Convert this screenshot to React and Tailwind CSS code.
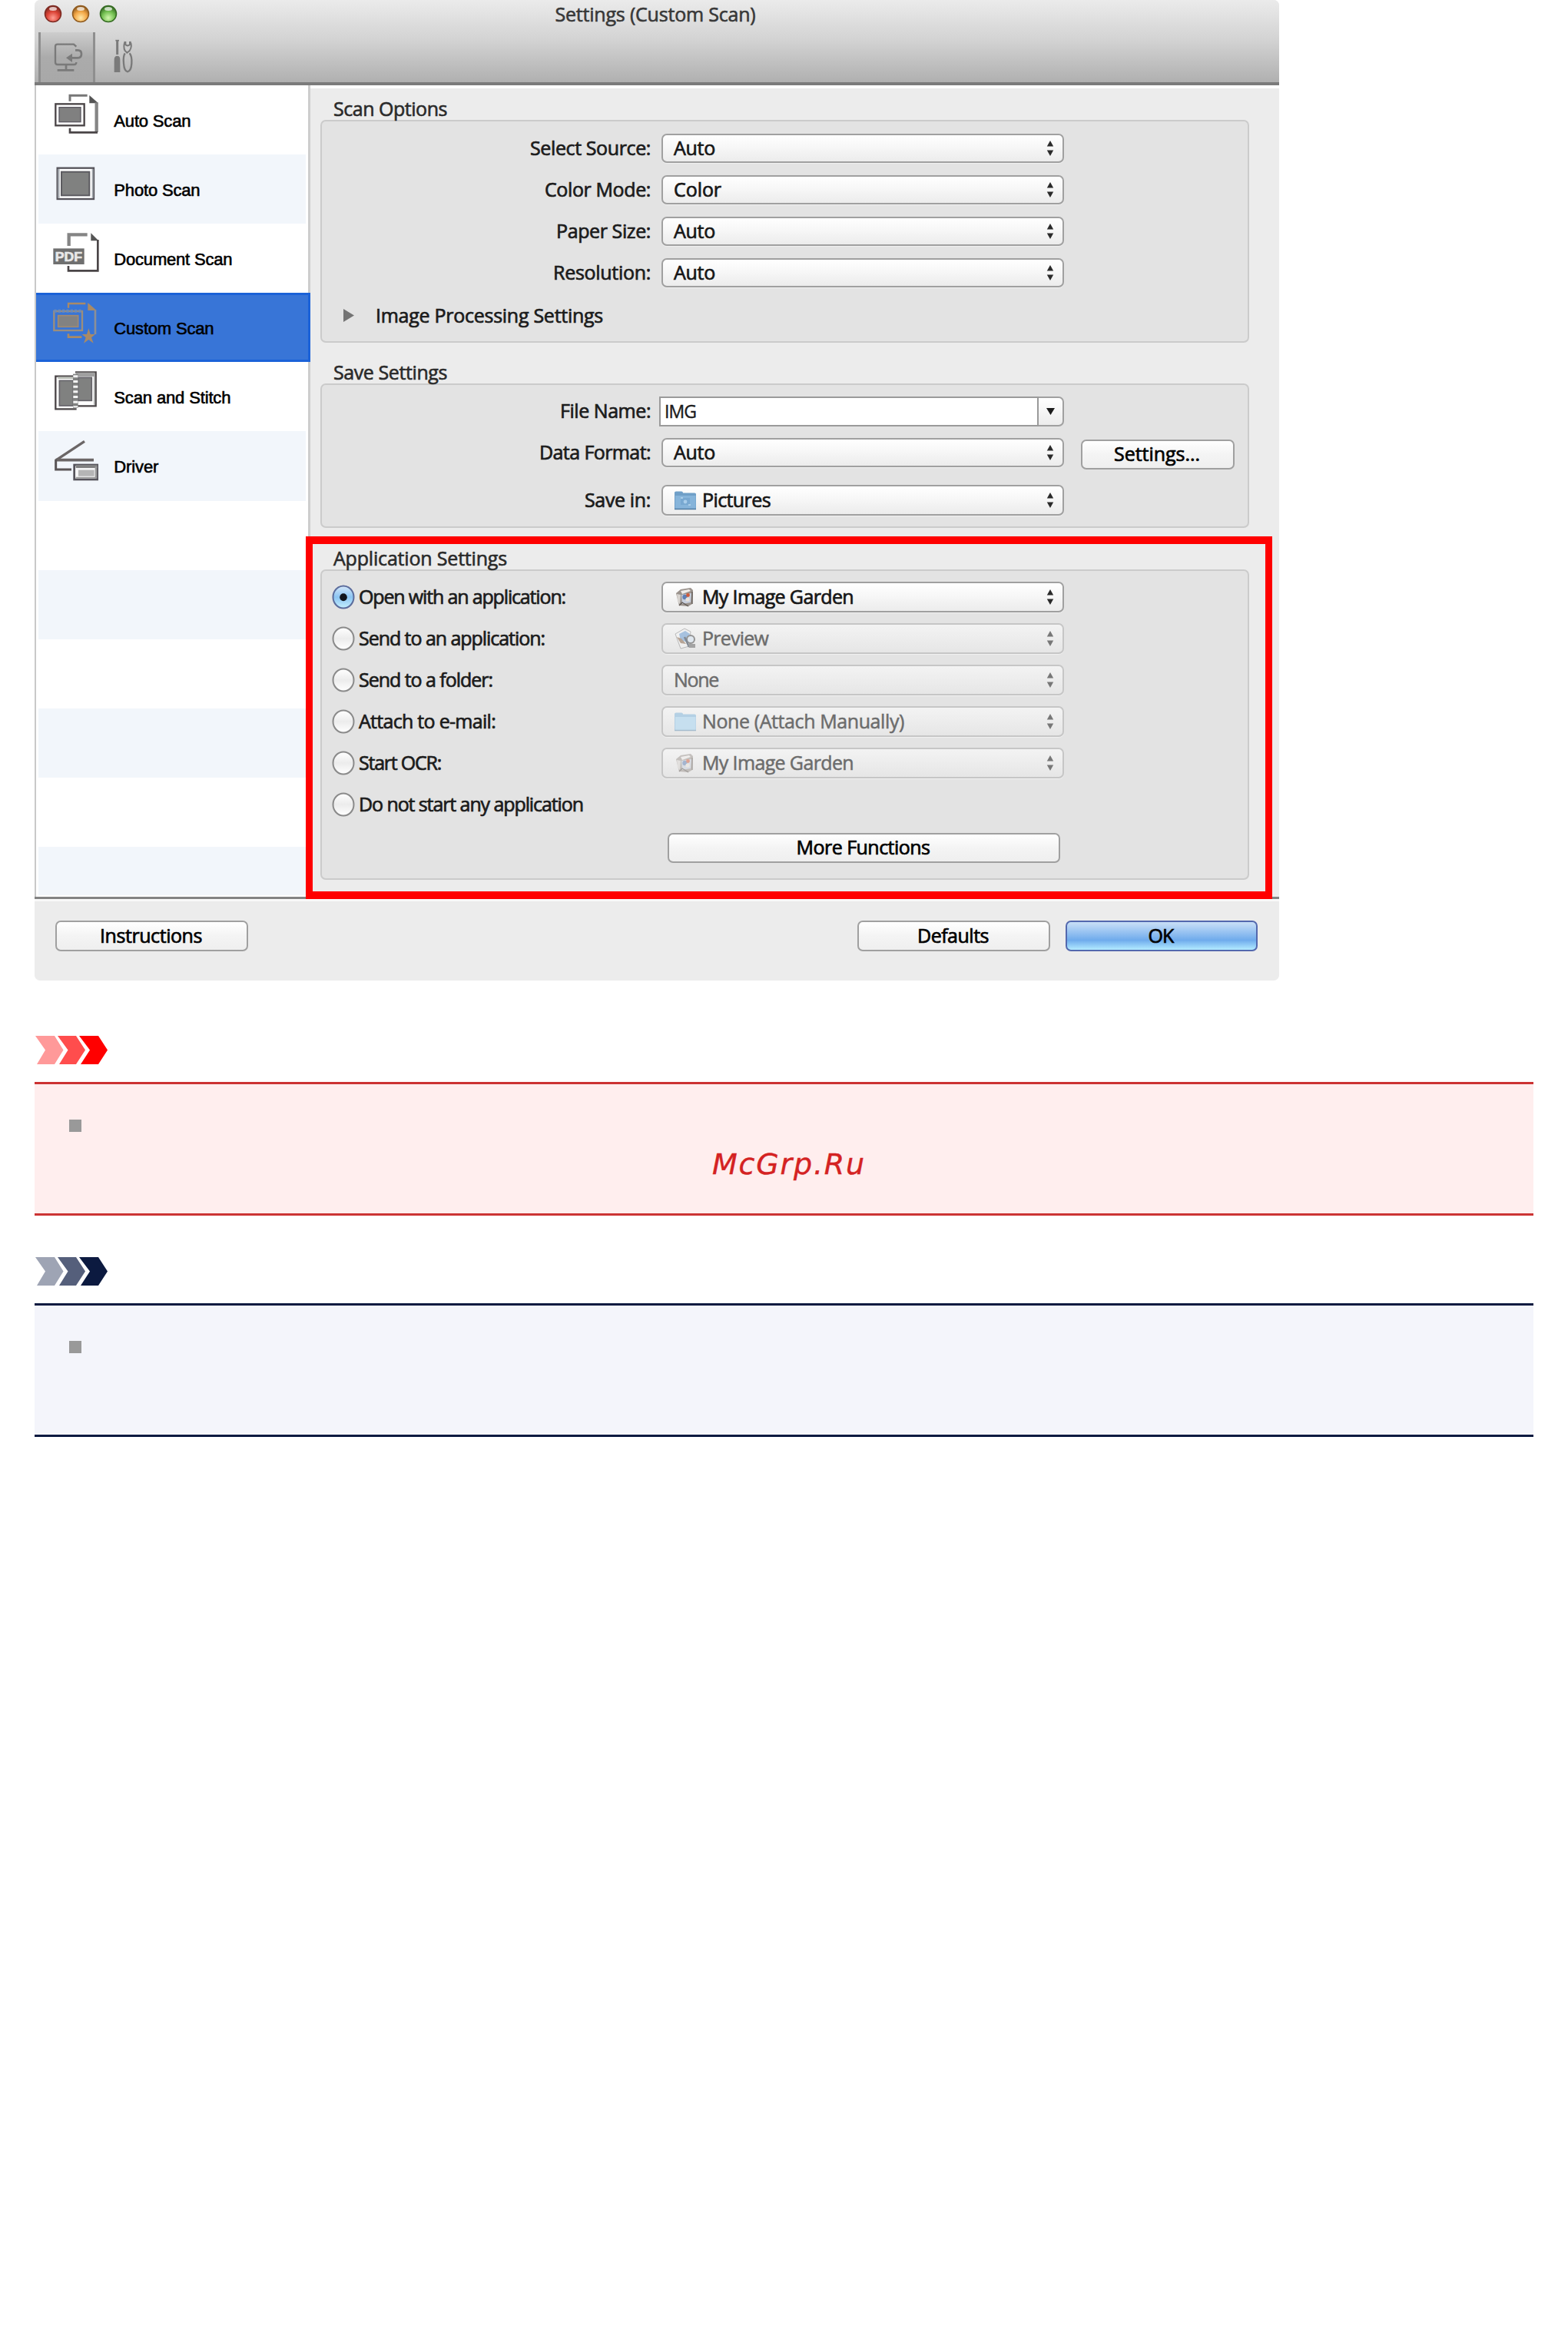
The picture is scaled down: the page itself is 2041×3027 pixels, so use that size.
import React, { useLayoutEffect, useRef, useState } from "react";

/* Single line of text whose tracking is adjusted to fill a known width. */
function Fit({ w, className = "", children }) {
  const ref = useRef(null);
  const [ls, setLs] = useState(0);
  useLayoutEffect(() => {
    const natural = ref.current.getBoundingClientRect().width;
    setLs((w - natural) / String(children).length);
  }, []);
  return (
    <span ref={ref} style={{ letterSpacing: ls }} className={`inline-block whitespace-pre ${className}`}>
      {children}
    </span>
  );
}

function Arrows({ dim }) {
  return (
    <svg width="10" height="24" viewBox="0 0 10 24" className={dim ? "fill-[#777]" : "fill-[#2a2a2a]"}>
      <path d="M5 2 L9.200 9.500 H0.800 Z M5 22 L9.200 14.500 H0.800 Z" />
    </svg>
  );
}

function FolderIcon({ pale }) {
  return (
    <svg width="30" height="26" viewBox="0 0 30 26" className="mr-[7px]">
      <path d="M1 3 Q1 1.5 3 1.5 H10 Q12 1.5 12 3.5 H27 Q29 3.5 29 5 V24.5 H1 Z" fill={pale ? "#b4d0e4" : "#6f9fc8"} />
      <path d="M2 7 H28.5 V24 H2 Z" fill={pale ? "#c6dfef" : "#86b4da"} />
      <path d="M1 24.5 H29" stroke={pale ? "#a5bccd" : "#4e7ba2"} strokeWidth="1.5" />
      {!pale && (
        <g>
          <rect x="9" y="10" width="12" height="9" fill="#78a8d1" />
          <circle cx="15" cy="15" r="2.4" fill="#a9cdea" />
          <path d="M9 10 h3 M19 19 h3" stroke="#b8d6ee" strokeWidth="1.5" />
        </g>
      )}
    </svg>
  );
}

function GardenIcon({ pale }) {
  return (
    <svg width="30" height="26" viewBox="0 0 30 26" className={pale ? "mr-[7px] opacity-50" : "mr-[7px]"}>
      <path d="M3 8 L9 3 L22 1 L25 4 L24 22 L19 25 L7 24 Z" fill="#9b938d" />
      <path d="M9 5 L20 3 L22 5 L11 9 Z" fill="#efecea" />
      <path d="M4 9 L9 10 L8 22 L5 19 Z" fill="#d8d4d0" />
      <path d="M10 10 L23 8 L22 20 L11 22 Z" fill="#c7cfdd" />
      <circle cx="14.500" cy="13" r="3.200" fill="#5f7fb4" />
      <circle cx="18.500" cy="10.500" r="2.400" fill="#cf5a3a" />
      <circle cx="18" cy="16" r="2.600" fill="#e9e2da" />
      <path d="M7 24 L11 20 L19 25 M24 6 V22" stroke="#5d5651" strokeWidth="1.300" fill="none" />
    </svg>
  );
}

function PreviewIcon() {
  return (
    <svg width="30" height="28" viewBox="0 0 30 28" className="mr-[7px] opacity-75">
      <path d="M2 8 L14 1 L22 5 L20 24 L9 27 Z" fill="#f2f2f2" stroke="#a9a9a9" />
      <path d="M7 8 L15 4 L21 8 L17 18 L9 17 Z" fill="#8fb3da" />
      <path d="M4 12 L10 14 L16 21 L9 20 Z" fill="#a58d79" />
      <circle cx="22" cy="15" r="5" fill="#dbe6f0" stroke="#777" strokeWidth="2" />
      <path d="M14 12 L20 25" stroke="#5f6a78" strokeWidth="2.500" />
      <path d="M19 21 H28 V26 H20 Z" fill="#8c8c8c" />
    </svg>
  );
}

function Select({ text, w, dim, icon, tall }) {
  const look = dim
    ? "border-[#c6c6c6] from-[#f3f3f3] to-[#e6e6e6] text-[#6c6c6c] [-webkit-text-stroke:0.5px]"
    : "border-[#a0a0a0] from-white via-[#f6f6f6] to-[#ececec] text-[#161616]";
  return (
    <div className={`flex w-[524px] shrink-0 items-center rounded-[7px] border-2 bg-linear-to-b pl-[14px] pr-[11px] shadow-[0_1px_1px_rgba(255,255,255,0.5)] ${tall ? "h-10" : "h-[38px]"} ${look}`}>
      {icon}
      <div className="flex-1 pb-[2px]">
        <Fit w={w}>{text}</Fit>
      </div>
      <Arrows dim={dim} />
    </div>
  );
}

function Button({ text, w, className }) {
  return (
    <button className={`flex items-center justify-center rounded-[7px] border-2 pb-[2px] pr-[2px] text-black ${className}`}>
      <Fit w={w}>{text}</Fit>
    </button>
  );
}

const plain = "border-[#a0a0a0] bg-linear-to-b from-white via-[#f4f4f4] to-[#efefef]";

function Group({ title, w, className, boxClass, children }) {
  return (
    <section className={className}>
      <div className="flex h-[30px] items-center pl-[17px] text-[#2a2a2a] [-webkit-text-stroke:0.6px]">
        <Fit w={w}>{title}</Fit>
      </div>
      <div className={`w-[1209px] rounded-[7px] border-2 border-[#cbcbcb] bg-[#e3e3e3] ${boxClass}`}>{children}</div>
    </section>
  );
}

function Row({ label, w, h = "h-[54px]", children }) {
  return (
    <div className={`flex items-center ${h}`}>
      <div className="flex w-[428px] shrink-0 justify-end pb-[2px]">
        <Fit w={w}>{label}</Fit>
      </div>
      {children}
    </div>
  );
}

function Radio({ on }) {
  return (
    <svg width="30" height="32" viewBox="0 0 30 32" className="shrink-0">
      <defs>
        <linearGradient id="radioOff" x1="0" y1="0" x2="0" y2="1">
          <stop offset="0" stopColor="#fff" />
          <stop offset="0.5" stopColor="#ececec" />
          <stop offset="1" stopColor="#fff" />
        </linearGradient>
        <linearGradient id="radioOn" x1="0" y1="0" x2="0" y2="1">
          <stop offset="0" stopColor="#d5e8fa" />
          <stop offset="0.5" stopColor="#8cc4f2" />
          <stop offset="1" stopColor="#c4f0ff" />
        </linearGradient>
      </defs>
      <ellipse cx="15" cy="16" rx="13.500" ry="14.500" fill={on ? "url(#radioOn)" : "url(#radioOff)"} stroke={on ? "#5b6c9c" : "#8a8a8a"} strokeWidth="2" />
      {on && <ellipse cx="15" cy="16.300" rx="4.800" ry="5" fill="#10141c" />}
    </svg>
  );
}

function RadioRow({ label, w, on, children }) {
  return (
    <div className="flex h-[54px] items-center">
      <div className="flex w-[442px] shrink-0 items-center pl-[13px]">
        <Radio on={on} />
        <div className="pb-[2px] pl-[5px]">
          <Fit w={w}>{label}</Fit>
        </div>
      </div>
      {children}
    </div>
  );
}

const items = [
  {
    name: "Auto Scan",
    w: 100,
    box: "110 333 190 270",
    art: (
      <g>
        <path d="M182 395 V373 H250" fill="none" stroke="#777" strokeWidth="9" />
        <path d="M258 372 L293 403 H258 Z" fill="#555" />
        <path d="M286 400 V516" stroke="#858585" strokeWidth="13" />
        <path d="M182 500 V517 H290" fill="none" stroke="#4a4547" strokeWidth="8" />
        <rect x="126" y="406" width="112" height="84" fill="#fff" stroke="#4a4547" strokeWidth="7" />
        <rect x="140" y="419" width="84" height="57" fill="#808080" stroke="#5c5962" strokeWidth="4" />
      </g>
    ),
  },
  {
    name: "Photo Scan",
    w: 112,
    box: "110 603 190 270",
    art: (
      <g>
        <rect x="133" y="656" width="142" height="121" fill="#fff" stroke="#55535a" strokeWidth="7" />
        <rect x="149" y="671" width="109" height="92" fill="#808180" stroke="#5c5b60" strokeWidth="6" />
        <path d="M138 660 V773" stroke="#a2a7ad" strokeWidth="7" />
        <path d="M271 660 V773" stroke="#a2a7ad" strokeWidth="6" />
      </g>
    ),
  },
  {
    name: "Document Scan",
    w: 154,
    box: "110 -87 190 270",
    art: (
      <g>
        <path d="M178 0 V-44 H250" fill="none" stroke="#858585" strokeWidth="13" />
        <path d="M264 -50 L294 -20 H264 Z" fill="#555" />
        <path d="M291 -24 V97 H176 V78" fill="none" stroke="#4a4547" strokeWidth="8" />
        <rect x="117" y="10" width="121" height="62" fill="#6f6f6f" />
        <text x="177" y="60" textAnchor="middle" fontSize="52" fontWeight="700" fontFamily="Liberation Sans, sans-serif" fill="#e9e9e9" stroke="#e9e9e9" strokeWidth="2" textLength="106" lengthAdjust="spacingAndGlyphs">PDF</text>
      </g>
    ),
  },
  {
    name: "Custom Scan",
    w: 130,
    box: "110 183 190 270",
    art: (
      <g>
        <path d="M176 242 V225 H243" fill="none" stroke="#a98a66" strokeWidth="7" />
        <path d="M252 222 L286 252 H252 Z" fill="#a98a66" />
        <path d="M281 250 V345" stroke="#8b8f98" strokeWidth="8" />
        <path d="M176 343 V356 H228" fill="none" stroke="#a98a66" strokeWidth="8" />
        <rect x="120" y="255" width="110" height="75" fill="none" stroke="#9c8e7c" strokeWidth="7" />
        <path d="M120 254 H230" stroke="#6c8ab8" strokeWidth="12" strokeDasharray="10 6" />
        <rect x="136" y="272" width="78" height="44" fill="#828282" stroke="#a08a72" strokeWidth="5" />
        <path d="M255 322 L262 345 H281 L266 358 L274 380 L255 366 L236 380 L244 358 L229 345 H248 Z" fill="#a98a66" />
      </g>
    ),
  },
  {
    name: "Scan and Stitch",
    w: 152,
    box: "110 453 190 270",
    art: (
      <g>
        <path d="M208 637 H126 V509 H200" fill="#fff" stroke="#4a4547" strokeWidth="7" />
        <path d="M135 515 H195" stroke="#b9bdb6" strokeWidth="8" />
        <rect x="141" y="526" width="54" height="98" fill="#808180" stroke="#66646a" strokeWidth="5" />
        <path d="M203 493 H283 V625 H205" fill="#fff" stroke="#4a4547" strokeWidth="7" />
        <path d="M205 502 H279" stroke="#a0a0a0" strokeWidth="16" />
        <rect x="214" y="514" width="53" height="90" fill="#808180" stroke="#66646a" strokeWidth="5" />
        <path d="M278 510 V620" stroke="#aaa" strokeWidth="6" />
        <path d="M204 500 V632" stroke="#808180" strokeWidth="20" />
        <path d="M204 505 V630" stroke="#f4f4f4" strokeWidth="18" strokeDasharray="9 11" />
      </g>
    ),
  },
  {
    name: "Driver",
    w: 58,
    box: "110 723 190 270",
    art: (
      <g>
        <path d="M239 760 L130 832" stroke="#6b6666" strokeWidth="10" />
        <path d="M126 833 H275" stroke="#6b6666" strokeWidth="11" />
        <path d="M127 830 V870 H188" fill="none" stroke="#5a5556" strokeWidth="9" />
        <rect x="199" y="852" width="90" height="57" fill="#f4f4f4" stroke="#55535a" strokeWidth="8" />
        <path d="M205 858 H289" stroke="#808080" strokeWidth="12" />
        <path d="M284 858 V905" stroke="#999" strokeWidth="8" />
        <rect x="215" y="872" width="62" height="24" fill="#b5b5b5" />
        <path d="M205 902 H285" stroke="#999" strokeWidth="5" />
      </g>
    ),
  },
];

function Sidebar() {
  const rows = [...items, null, null, null, null, null, null];
  return (
    <nav className="flex h-[1056px] w-[359px] shrink-0 flex-col border-l-2 border-r-3 border-l-[#c9c9c9] border-r-[#cdcdcd] bg-white font-['Liberation_Sans',sans-serif] text-[22px] text-black [-webkit-text-stroke:0.6px]">
      {rows.map((it, i) => (
        <div
          key={i}
          className={`flex ${i === 11 ? "h-[63px]" : "h-[90.1px]"} shrink-0 ${
            i === 3 ? "-mr-[3px] border-3 border-l-0 border-[#1b62d8] bg-[#3875d7]" : i % 2 ? "mx-[3px] bg-[#f2f6fb]" : ""
          }`}
        >
          {it && (
            <div className={`flex items-center ${i === 3 ? "-my-[3px] pl-5" : i % 2 ? "pl-[17px]" : "pl-5"}`}>
              <svg width="63.33" height="90" viewBox={it.box} className="shrink-0">
                {it.art}
              </svg>
              <div className="pl-[18px] pt-[3px]">
                <Fit w={it.w}>{it.name}</Fit>
              </div>
            </div>
          )}
        </div>
      ))}
    </nav>
  );
}

function Light({ id, rim, mid, glow }) {
  return (
    <svg width="24" height="24" viewBox="0 0 24 24">
      <defs>
        <radialGradient id={id} cx="0.5" cy="0.75" r="0.7">
          <stop offset="0" stopColor={glow} />
          <stop offset="0.55" stopColor={mid} />
          <stop offset="1" stopColor={rim} />
        </radialGradient>
      </defs>
      <circle cx="12" cy="12" r="10.500" fill={`url(#${id})`} stroke={rim} strokeWidth="1.500" />
      <ellipse cx="12" cy="5.500" rx="5" ry="2.500" fill="#fff" opacity="0.7" />
    </svg>
  );
}

function Header() {
  return (
    <header className="h-[111px] rounded-t-[7px] border-b-4 border-[#7b7b7b] bg-linear-to-b from-[#ebebeb] via-[#d2d2d2] to-[#b0b0b0]">
      <div className="grid h-[42px] grid-cols-[1fr_auto_1fr] pt-[6px]">
        <div className="flex gap-3 pl-3">
          <Light id="lightRed" rim="#7d2a22" mid="#dc4437" glow="#ff9d92" />
          <Light id="lightAmber" rim="#8f5a1e" mid="#f3a746" glow="#ffe9a8" />
          <Light id="lightGreen" rim="#356b22" mid="#74c152" glow="#d2f7ae" />
        </div>
        <div className="flex h-[25px] items-center pr-1 text-[#383838] [-webkit-text-stroke:0.6px]">
          <Fit w={261}>Settings (Custom Scan)</Fit>
        </div>
      </div>
      <div className="flex h-[65px]">
        <div className="ml-[5px] h-[65px] w-[74px] border-x-3 border-[#8f8f8f] bg-linear-to-b from-[#cdcdcd] via-[#ababab] to-[#a8a8a8]">
          <svg width="68" height="65" viewBox="69 126 204 195" fill="none" stroke="#7a7a7a">
            <path d="M208 182 L198 173 H134 Q126 173 126 181 V243 Q126 252 134 252 H200 Q208 252 208 243" strokeWidth="7" />
            <path d="M168 254 V272 M134 274 H199" strokeWidth="8" />
            <path d="M204 196 H214 Q228 196 228 211 Q228 226 214 226 H190" strokeWidth="8" />
            <path d="M168 226 L192 209 V243 Z" fill="#7a7a7a" stroke="none" />
          </svg>
        </div>
        <svg width="30" height="46" viewBox="350 155 90 138" className="ml-[22px] mt-[9px]" fill="none" stroke="#7a7a7a">
          <path d="M370 160 V215" strokeWidth="9" />
          <path d="M363 160 H377" strokeWidth="5" />
          <path d="M358 284 V235 Q358 220 370 220 Q381 220 381 235 V284 Z" fill="#7a7a7a" stroke="none" />
          <path d="M400 164 Q392 184 400 200 L408 208 L418 200 Q430 182 420 164 M402 164 V176 Q410 184 419 176 V164" strokeWidth="6" />
          <path d="M400 210 Q392 222 395 250 Q397 280 410 282 Q424 280 426 250 Q428 222 418 210" strokeWidth="7" />
        </svg>
      </div>
    </header>
  );
}

function Notice({ colors, line, fill, children }) {
  return (
    <section className="flex w-[1951px] flex-col gap-[23px]">
      <svg width="96" height="37" viewBox="0 0 96 37">
        <path d="M1 0 H26 L37.500 18.500 L26 37 H3 L14 18.500 Z" fill={colors[0]} />
        <path d="M30 0 H54 L66 18.500 L54 37 H32 L43.500 18.500 Z" fill={colors[1]} />
        <path d="M58 0 H83 L95 18.500 L83 37 H60 L72 18.500 Z" fill={colors[2]} />
      </svg>
      <div className={`h-[174px] border-y-3 pl-[45px] pt-[46px] ${line} ${fill}`}>
        <div className="size-4 bg-[#999]" />
        {children}
      </div>
    </section>
  );
}

export default function App() {
  return (
    <div className="flex h-[3027px] w-[2041px] flex-col bg-white pl-[45px]">
      <div className="relative h-[1276px] w-[1620px] rounded-[7px] bg-[#ececec] font-['Open_Sans','Noto_Sans',sans-serif] text-[25px] leading-none text-[#1b1b1b] [-webkit-text-stroke:0.7px]">
        <Header />
        <div className="flex h-[1056px]">
          <Sidebar />
          <main className="flex-1 border-t-4 border-white pl-[13px]">
            <Group title="Scan Options" w={148} className="mt-[11px]" boxClass="h-[290px] pt-[8px]">
              <Row label="Select Source:" w={157}>
                <div className="pl-[14px]"><Select text="Auto" w={54} /></div>
              </Row>
              <Row label="Color Mode:" w={138}>
                <div className="pl-[14px]"><Select text="Color" w={62} /></div>
              </Row>
              <Row label="Paper Size:" w={123}>
                <div className="pl-[14px]"><Select text="Auto" w={54} /></div>
              </Row>
              <Row label="Resolution:" w={127}>
                <div className="pl-[14px]"><Select text="Auto" w={54} /></div>
              </Row>
              <div className="flex h-[56px] items-center pl-[28px]">
                <svg width="14" height="17" viewBox="0 0 14 17" className="fill-[#747474]">
                  <path d="M0 0 L14 8.500 L0 17 Z" />
                </svg>
                <div className="pl-[28px]"><Fit w={296}>Image Processing Settings</Fit></div>
              </div>
            </Group>
            <Group title="Save Settings" w={148} className="mt-[23px]" boxClass="h-[188px] pt-[7px]">
              <Row label="File Name:" w={118}>
                <div className="ml-[11px] flex h-[39px] w-[527px]">
                  <div className="flex flex-1 items-center border-2 border-[#9a9a9a] bg-white pl-[5px] text-[23px] [-webkit-text-stroke:0.4px]">
                    <Fit w={41}>IMG</Fit>
                  </div>
                  <div className="flex w-[33px] items-center justify-center rounded-r-[7px] border-2 border-l-0 border-[#a0a0a0] bg-linear-to-b from-white to-[#ececec]">
                    <svg width="11" height="9" viewBox="0 0 11 9"><path d="M0 0 H11 L5.500 9 Z" fill="#1c1c1c" /></svg>
                  </div>
                </div>
              </Row>
              <Row label="Data Format:" w={145} h="h-[54px]">
                <div className="flex items-center gap-[22px] pl-[14px]">
                  <Select text="Auto" w={54} />
                  <div className="pt-[4px]"><Button text="Settings..." w={112} className={`h-[39px] w-[200px] ${plain}`} /></div>
                </div>
              </Row>
              <Row label="Save in:" w={86} h="h-[70px]">
                <div className="pl-[14px]"><Select text="Pictures" w={89} tall icon={<FolderIcon />} /></div>
              </Row>
            </Group>
            <Group title="Application Settings" w={226} className="mt-[24px]" boxClass="h-[404px] pt-[7px]">
              <RadioRow label="Open with an application:" w={269} on>
                <Select text="My Image Garden" w={197} tall icon={<GardenIcon />} />
              </RadioRow>
              <RadioRow label="Send to an application:" w={242}>
                <Select text="Preview" w={86} tall dim icon={<PreviewIcon />} />
              </RadioRow>
              <RadioRow label="Send to a folder:" w={174}>
                <Select text="None" w={58} tall dim />
              </RadioRow>
              <RadioRow label="Attach to e-mail:" w={178}>
                <Select text="None (Attach Manually)" w={263} tall dim icon={<FolderIcon pale />} />
              </RadioRow>
              <RadioRow label="Start OCR:" w={107}>
                <Select text="My Image Garden" w={197} tall dim icon={<GardenIcon pale />} />
              </RadioRow>
              <RadioRow label="Do not start any application" w={292} />
              <div className="flex h-[58px] items-center pl-[450px]">
                <Button text="More Functions" w={174} className={`h-[39px] w-[511px] ${plain}`} />
              </div>
            </Group>
          </main>
        </div>
        <footer className="flex h-[109px] border-t-3 border-[#838383]">
          <div className="flex h-[106px] w-full items-start border-t-3 border-[#f8f8f8] pl-[27px] pr-[28px] pt-[25px]">
            <Button text="Instructions" w={133} className={`h-10 w-[251px] ${plain}`} />
            <Button text="Defaults" w={93} className={`ml-auto h-10 w-[251px] ${plain}`} />
            <Button
              text="OK"
              w={33}
              className="ml-5 h-10 w-[250px] border-[#5368ae] bg-linear-to-b from-[#c3dcf6] from-5% via-[#6fabec] via-65% to-[#b3ebff]"
            />
          </div>
        </footer>
        <div className="pointer-events-none absolute left-[353px] top-[698px] h-[472px] w-[1258px] border-[9px] border-y-[10px] border-[#ff0000]" />
      </div>
      <div className="flex flex-col gap-[54px] pt-[72px]">
        <Notice colors={["#ff9999", "#ff4d4d", "#ff0000"]} line="border-[#cc3333]" fill="bg-[#ffeeee]">
          <p className="mt-[23px] pl-[837px] font-['DejaVu_Sans',sans-serif] text-[38px] italic leading-none text-[#d42222] [-webkit-text-stroke:0.4px]">
            <Fit w={200}>McGrp.Ru</Fit>
          </p>
        </Notice>
        <Notice colors={["#9ea4b4", "#555f7b", "#0c1a40"]} line="border-[#0c1a40]" fill="bg-[#f4f5fb]" />
      </div>
    </div>
  );
}
